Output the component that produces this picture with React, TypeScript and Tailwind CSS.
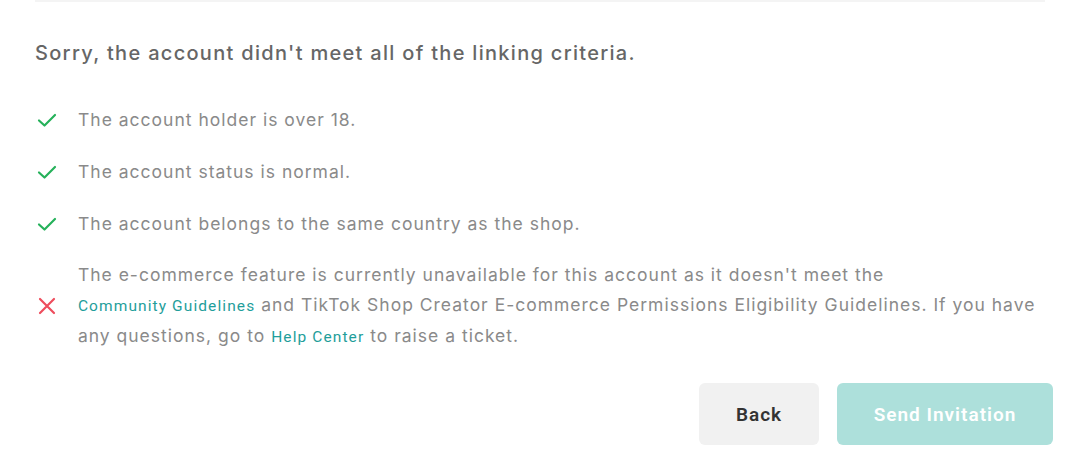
import React from "react";

const Check = () => (
  <svg width="22" height="22" viewBox="0 0 22 22" fill="none">
    <path d="M3 11.5 L8.5 16.5 L19 6" stroke="#25b15a" strokeWidth="2.2" strokeLinecap="round" strokeLinejoin="round" />
  </svg>
);

const Cross = () => (
  <svg width="22" height="22" viewBox="0 0 22 22" fill="none">
    <path d="M4 4 L18 18 M18 4 L4 18" stroke="#ee4d5d" strokeWidth="2.2" strokeLinecap="round" />
  </svg>
);

export default function App() {
  const link = "text-[#1f9e9b] text-[15.5px] tracking-[1.1px]";
  return (
    <div className="w-[1080px] h-[461px] bg-white overflow-hidden" style={{ fontFamily: "Inter, 'Noto Sans', sans-serif" }}>
      <div className="mx-[35px] h-[2px] bg-[#f4f4f4]" />
      <div className="px-[35px]">
        <h2 className="mt-[38px] text-[20px] leading-[26px] font-medium tracking-[1.3px] text-[#666]">
          Sorry, the account didn't meet all of the linking criteria.
        </h2>
        <div className="mt-[41px] flex flex-col gap-[26px] text-[17.5px] tracking-[1px] text-[#8a8a8a]">
          {["The account holder is over 18.", "The account status is normal.", "The account belongs to the same country as the shop."].map((t) => (
            <div key={t} className="flex items-center h-[26px]">
              <div className="w-[43px] flex items-center pl-[1px]"><Check /></div>
              <span>{t}</span>
            </div>
          ))}
          <div className="flex items-center mt-[-3px]">
            <div className="w-[43px] flex items-center pl-[1px]"><Cross /></div>
            <p className="leading-[29.5px] w-[970px]">
              The e-commerce feature is currently unavailable for this account as it doesn't meet the
              <br />
              <span className={link} style={{ fontFamily: "Roboto, sans-serif" }}>Community Guidelines</span> and TikTok Shop Creator E-commerce Permissions Eligibility Guidelines. If you have
              <br />
              any questions, go to{" "}
              <span className={link} style={{ fontFamily: "Roboto, sans-serif" }}>Help Center</span> to raise a ticket.
            </p>
          </div>
        </div>
        <div className="mt-[30px] flex justify-end gap-[18px] mr-[-8px]">
          <button className="w-[120px] h-[62px] rounded-[6px] bg-[#f1f1f1] text-[19px] font-semibold tracking-[1px] text-[#333] pt-[3px]" style={{ fontFamily: "Roboto, sans-serif" }}>
            Back
          </button>
          <button className="w-[216px] h-[62px] rounded-[6px] bg-[#ade0db] text-[19px] font-semibold tracking-[1px] text-white pt-[3px]" style={{ fontFamily: "Roboto, sans-serif" }}>
            Send Invitation
          </button>
        </div>
      </div>
    </div>
  );
}
